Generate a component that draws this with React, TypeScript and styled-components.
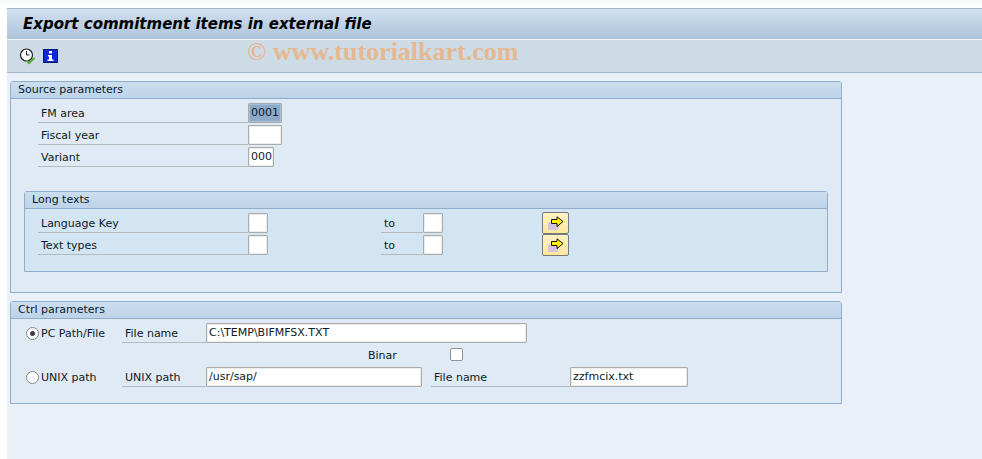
import styled, { createGlobalStyle } from 'styled-components';

const GlobalStyle = createGlobalStyle`
  html, body {
    margin: 0;
    padding: 0;
    background: #ffffff;
  }
  body {
    font-family: "DejaVu Sans", "Noto Sans", sans-serif;
    font-size: 11px;
    color: #0c1a28;
  }
`;

const Page = styled.div`
  width: 982px;
  height: 459px;
  padding: 8px 0 0 7px;
  box-sizing: border-box;
  overflow: hidden;
  background: linear-gradient(#f6f8fa, #ffffff 8px);
`;

const Window = styled.div`
  position: relative;
  height: 100%;
  background: #e9f0f8;
  border-top: 1px solid #a3b6c9;
`;

const TitleBar = styled.div`
  height: 30px;
  padding-left: 16px;
  display: flex;
  align-items: center;
  background: linear-gradient(#d0e0ef, #adc4db);
  border-bottom: 1px solid #eef4f9;
`;

const Title = styled.h1`
  margin: 0;
  font-family: "DejaVu Sans", sans-serif;
  font-size: 15px;
  font-weight: bold;
  font-style: italic;
  color: #000;
`;

const Toolbar = styled.div`
  height: 32px;
  padding-left: 12px;
  display: flex;
  align-items: center;
  gap: 7px;
  background: #cddbe7;
  border-bottom: 1px solid #a3b6cb;
`;

const Watermark = styled.div`
  position: absolute;
  left: 240px;
  top: 29px;
  font-family: "Liberation Serif", serif;
  font-size: 26px;
  font-weight: bold;
  line-height: 28px;
  color: #e6b88f;
  white-space: nowrap;
`;

const Content = styled.div`
  padding: 8px 0 0 3px;
  width: 832px;
  display: flex;
  flex-direction: column;
  gap: 8px;
`;

const Group = styled.section<{ $height: number; $inner?: boolean }>`
  height: ${(p) => p.$height}px;
  box-sizing: border-box;
  background: ${(p) => (p.$inner ? '#d3e4f2' : '#dfeaf4')};
  border: 1px solid #8fadcc;
  border-top-left-radius: 3px;
  border-top-right-radius: 3px;
`;

const GroupHeader = styled.div`
  height: 16px;
  padding-left: 7px;
  line-height: 15px;
  background: linear-gradient(#cbdeef, #bdd3e9);
  border-bottom: 1px solid #8fadcc;
`;

const GroupBody = styled.div<{ $top: number; $left: number }>`
  padding: ${(p) => p.$top}px 0 0 ${(p) => p.$left}px;
`;

const InnerWrap = styled.div`
  margin: 22px 13px 0 13px;
`;

const Row = styled.div<{ $height?: number }>`
  height: ${(p) => p.$height ?? 22}px;
  display: flex;
  align-items: flex-start;
`;

const Label = styled.label<{ $width: number; $ml?: number }>`
  width: ${(p) => p.$width}px;
  margin-left: ${(p) => p.$ml ?? 0}px;
  height: 20px;
  padding-left: 3px;
  box-sizing: border-box;
  line-height: 21px;
  border-bottom: 1px solid #b4b9bd;
  white-space: nowrap;
  flex: none;
`;

const Input = styled.div<{ $width: number; $selected?: boolean }>`
  width: ${(p) => p.$width}px;
  height: 20px;
  box-sizing: border-box;
  padding-left: 2px;
  line-height: 18px;
  background: ${(p) => (p.$selected ? '#8ba9c9' : '#ffffff')};
  border: 1px solid #a9abad;
  border-radius: 1px;
  box-shadow: inset 0 0 0 1px ${(p) => (p.$selected ? '#a9bdd3' : '#ececec')};
  white-space: nowrap;
  flex: none;
`;

const ArrowButton = styled.button<{ $ml: number }>`
  width: 27px;
  height: 22px;
  margin: -1px 0 0 ${(p) => p.$ml}px;
  padding: 0;
  display: flex;
  align-items: center;
  justify-content: center;
  background: linear-gradient(#fff3c4, #fde79c);
  border: 1px solid #77787a;
  border-radius: 2px;
  flex: none;
`;

const RadioLabel = styled.div`
  width: 96px;
  margin-left: 15px;
  height: 20px;
  display: flex;
  align-items: center;
  gap: 2px;
  flex: none;
`;

const Radio = styled.span<{ $on?: boolean }>`
  width: 13px;
  height: 13px;
  display: flex;
  align-items: center;
  justify-content: center;
  box-sizing: border-box;
  background: #ffffff;
  border: 1px solid #80868c;
  border-radius: 50%;
  &::after {
    content: '';
    width: 5px;
    height: 5px;
    border-radius: 50%;
    background: ${(p) => (p.$on ? '#3a3f45' : 'transparent')};
  }
`;

const PlainText = styled.span<{ $width: number; $ml: number }>`
  width: ${(p) => p.$width}px;
  margin-left: ${(p) => p.$ml}px;
  flex: none;
  line-height: 21px;
`;

const Checkbox = styled.span`
  width: 13px;
  height: 13px;
  margin-top: 3px;
  box-sizing: border-box;
  background: #ffffff;
  border: 1px solid #8d9297;
  border-radius: 2px;
  flex: none;
`;

const ClockIcon = () => (
  <svg width="17" height="17" viewBox="0 0 17 17">
    <circle cx="7.5" cy="7" r="6" fill="#fff" stroke="#222" strokeWidth="1.2" />
    <path d="M7.5 3V7H10.5" fill="none" stroke="#222" strokeWidth="1" />
    <path d="M7.5 12.5L10 15L15.5 10" fill="none" stroke="#5cab3c" strokeWidth="2.2" />
  </svg>
);

const InfoIcon = () => (
  <svg width="15" height="14" viewBox="0 0 15 14">
    <rect x="0.5" y="0.5" width="14" height="13" fill="#0a2ad8" stroke="#0a1a60" />
    <path d="M6 2H9V4.5H6ZM5 6H9V10.5H10.5V12H4.5V10.5H6V7.5H5Z" fill="#fff" />
  </svg>
);

const ArrowIcon = () => (
  <svg width="17" height="15" viewBox="0 0 17 15">
    <rect x="1" y="6.5" width="10" height="7.5" fill="#d3c4e0" />
    <path d="M4.5 3.5H10V0.8L16 5.5L10 10.5V7.5H4.5Z" fill="#fff200" stroke="#111" strokeWidth="1" />
  </svg>
);

export default function App() {
  return (
    <Page>
      <GlobalStyle />
      <Window>
        <TitleBar>
          <Title>Export commitment items in external file</Title>
        </TitleBar>
        <Toolbar>
          <ClockIcon />
          <InfoIcon />
        </Toolbar>
        <Watermark>© www.tutorialkart.com</Watermark>
        <Content>
          <Group $height={212}>
            <GroupHeader>Source parameters</GroupHeader>
            <GroupBody $top={4} $left={27}>
              <Row>
                <Label $width={210}>FM area</Label>
                <Input $width={34} $selected>0001</Input>
              </Row>
              <Row>
                <Label $width={210}>Fiscal year</Label>
                <Input $width={34} />
              </Row>
              <Row>
                <Label $width={210}>Variant</Label>
                <Input $width={26}>000</Input>
              </Row>
            </GroupBody>
            <InnerWrap>
              <Group $height={81} $inner>
                <GroupHeader>Long texts</GroupHeader>
                <GroupBody $top={4} $left={13}>
                  <Row>
                    <Label $width={210}>Language Key</Label>
                    <Input $width={20} />
                    <Label $width={42} $ml={113}>to</Label>
                    <Input $width={20} />
                    <ArrowButton $ml={99}><ArrowIcon /></ArrowButton>
                  </Row>
                  <Row>
                    <Label $width={210}>Text types</Label>
                    <Input $width={20} />
                    <Label $width={42} $ml={113}>to</Label>
                    <Input $width={20} />
                    <ArrowButton $ml={99}><ArrowIcon /></ArrowButton>
                  </Row>
                </GroupBody>
              </Group>
            </InnerWrap>
          </Group>
          <Group $height={103}>
            <GroupHeader>Ctrl parameters</GroupHeader>
            <GroupBody $top={4} $left={0}>
              <Row $height={22}>
                <RadioLabel><Radio $on />PC Path/File</RadioLabel>
                <Label $width={84}>File name</Label>
                <Input $width={321}>C:\TEMP\BIFMFSX.TXT</Input>
              </Row>
              <Row $height={22}>
                <PlainText $width={82} $ml={357}>Binar</PlainText>
                <Checkbox />
              </Row>
              <Row>
                <RadioLabel><Radio />UNIX path</RadioLabel>
                <Label $width={84}>UNIX path</Label>
                <Input $width={216}>/usr/sap/</Input>
                <Label $width={139} $ml={9}>File name</Label>
                <Input $width={118}>zzfmcix.txt</Input>
              </Row>
            </GroupBody>
          </Group>
        </Content>
      </Window>
    </Page>
  );
}
